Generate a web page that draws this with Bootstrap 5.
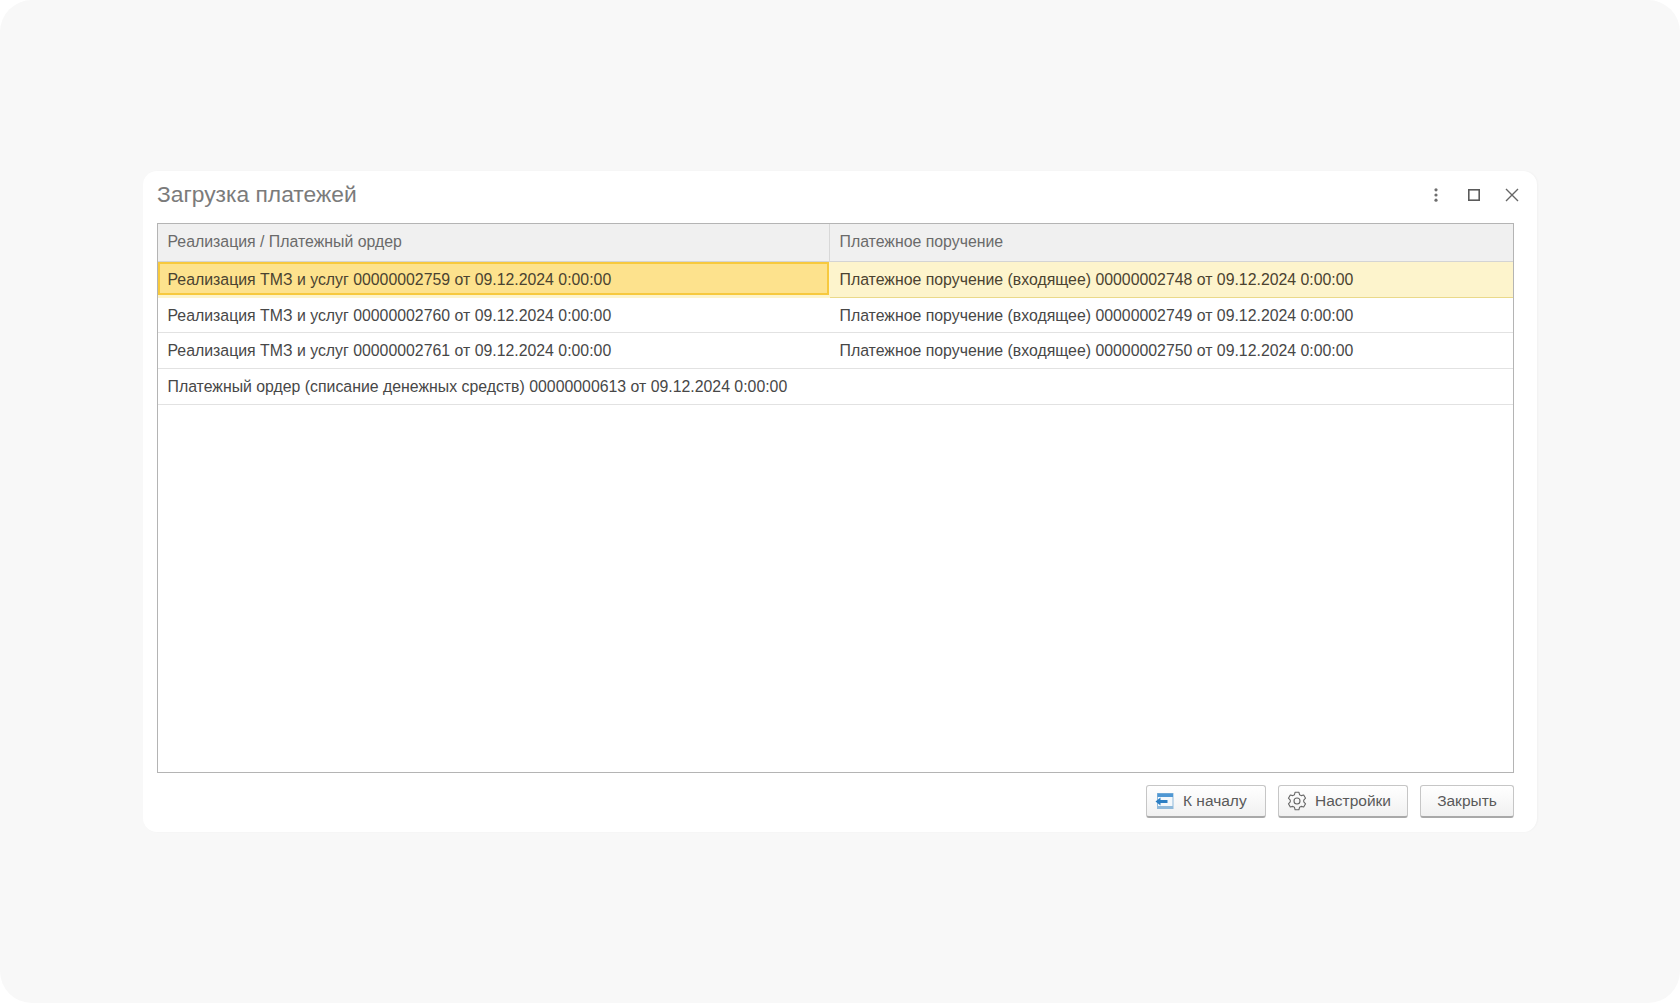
<!DOCTYPE html>
<html lang="ru">
<head>
<meta charset="utf-8">
<title>Загрузка платежей</title>
<link href="https://cdn.jsdelivr.net/npm/bootstrap@5.3.0/dist/css/bootstrap.min.css" rel="stylesheet">
<style>
html,body{height:100%;background:#fff;margin:0}
body{font-family:"Liberation Sans",Arial,sans-serif;color:#4a4a4a}
.stage{height:1003px;background:#f8f8f8;border-radius:32px;padding-top:171px;padding-left:143px;padding-right:143px}
.dialog-box{background:#fff;border-radius:14px;height:661px;padding:0 22px 0 14px;box-shadow:1px 0 2px rgba(0,0,0,.03)}
.dialog-head{height:52px;width:1357px;padding-bottom:5px}
.dialog-title{font-size:22.8px;color:#7b7b7b;line-height:1;margin:0;font-weight:400}
.head-tools{gap:24px;margin-right:-5px}
.head-tools svg{display:block}
.pay-grid{height:550px;width:1357px;border:1px solid #b4b4b4;background:#fff;overflow:hidden}
.pay-table{width:100%;table-layout:fixed;border-collapse:separate;border-spacing:0;font-size:15.85px;margin:0}
.pay-table th,.pay-table td{padding:0 0 0 9.5px;white-space:nowrap;font-weight:400;vertical-align:middle}
.pay-table th{height:38px;padding-bottom:2px;background:#f0f0f0;color:#6a6a6a;border-bottom:1px solid #d4d4d4}
.pay-table th:first-child{border-right:1px solid #d8d8d8}
.pay-table td{height:35.7px;border-bottom:1px solid #e2e2e2;color:#474747}
.pay-table tbody tr:nth-child(-n+2) td{padding-top:1.5px}
.pay-table .col-a{width:672px}
.pay-table tr.row-on td{background:#fdf4cc;border-bottom-color:#ead98a;color:#4a4230}
.pay-table tbody tr.row-on td.cell-on{background:#fde28d;background-clip:padding-box;box-shadow:inset 0 0 0 2px #f7c93e;border-bottom:3px solid #fdf4cc;border-right:1px solid #fdf4cc;padding-top:3px}
.foot-bar{gap:12px;padding-top:12px;width:1357px}
.tool-btn{height:33px;padding:0 0 0 8px;font-size:15.5px;color:#5a5a5a;background:linear-gradient(#fff,#f1f1f1);border:1px solid #c6c6c6;border-bottom:2px solid #a9a9a9;border-radius:3px;line-height:1;gap:8px}
.tool-btn:hover{color:#5a5a5a;background:linear-gradient(#fff,#f1f1f1);border-color:#c6c6c6}
.btn-start{width:120px}
.btn-setup{width:130px}
.btn-close-dlg{width:94px;padding:0}
</style>
</head>
<body>
<div class="stage">
  <div class="dialog-box">
    <div class="dialog-head d-flex align-items-center justify-content-between">
      <h1 class="dialog-title">Загрузка платежей</h1>
      <div class="head-tools d-flex align-items-center">
        <svg width="14" height="14" viewBox="0 0 14 14" fill="#6e6e6e"><circle cx="7" cy="1.8" r="1.6"/><circle cx="7" cy="7" r="1.6"/><circle cx="7" cy="12.2" r="1.6"/></svg>
        <svg width="14" height="14" viewBox="0 0 14 14" fill="none" stroke="#5a5a5a" stroke-width="1.6"><rect x="1.8" y="1.8" width="10.4" height="10.4"/></svg>
        <svg width="14" height="14" viewBox="0 0 14 14" fill="none" stroke="#666" stroke-width="1.4"><path d="M1 1l12 12M13 1L1 13"/></svg>
      </div>
    </div>
    <div class="pay-grid">
      <table class="pay-table">
        <thead><tr><th class="col-a">Реализация / Платежный ордер</th><th>Платежное поручение</th></tr></thead>
        <tbody>
          <tr class="row-on"><td class="cell-on">Реализация ТМЗ и услуг 00000002759 от 09.12.2024 0:00:00</td><td>Платежное поручение (входящее) 00000002748 от 09.12.2024 0:00:00</td></tr>
          <tr><td>Реализация ТМЗ и услуг 00000002760 от 09.12.2024 0:00:00</td><td>Платежное поручение (входящее) 00000002749 от 09.12.2024 0:00:00</td></tr>
          <tr><td>Реализация ТМЗ и услуг 00000002761 от 09.12.2024 0:00:00</td><td>Платежное поручение (входящее) 00000002750 от 09.12.2024 0:00:00</td></tr>
          <tr><td>Платежный ордер (списание денежных средств) 00000000613 от 09.12.2024 0:00:00</td><td></td></tr>
        </tbody>
      </table>
    </div>
    <div class="foot-bar d-flex justify-content-end">
      <button type="button" class="btn tool-btn btn-start d-flex align-items-center">
        <svg width="20" height="20" viewBox="0 0 20 20"><rect x="2.5" y="2.5" width="15.5" height="15" fill="#f4f8fb" stroke="#8fb9da" stroke-width="1"/><rect x="2.5" y="2.5" width="15.5" height="3.5" fill="#4f97d3"/><rect x="2.5" y="15" width="15.5" height="2.5" fill="#8fb9da"/><path d="M.5 10.5l5-4v2.6h7v2.8h-7v2.6z" fill="#2c7fc4"/></svg>
        К началу
      </button>
      <button type="button" class="btn tool-btn btn-setup d-flex align-items-center">
        <svg width="20" height="20" viewBox="0 0 20 20" fill="none" stroke="#666" stroke-width="1.1" stroke-linejoin="round"><path d="M7.45 3.7L8.13 1.2H11.87L12.55 3.7L14.19 4.64L16.69 3.98L18.56 7.22L16.73 9.05V10.95L18.56 12.78L16.69 16.02L14.19 15.36L12.55 16.3L11.87 18.8H8.13L7.45 16.3L5.81 15.36L3.31 16.02L1.44 12.78L3.27 10.95V9.05L1.44 7.22L3.31 3.98L5.81 4.64Z"/><circle cx="10" cy="10" r="3"/></svg>
        Настройки
      </button>
      <button type="button" class="btn tool-btn btn-close-dlg d-flex align-items-center justify-content-center">Закрыть</button>
    </div>
  </div>
</div>
<script src="https://cdn.jsdelivr.net/npm/bootstrap@5.3.0/dist/js/bootstrap.bundle.min.js"></script>
</body>
</html>
